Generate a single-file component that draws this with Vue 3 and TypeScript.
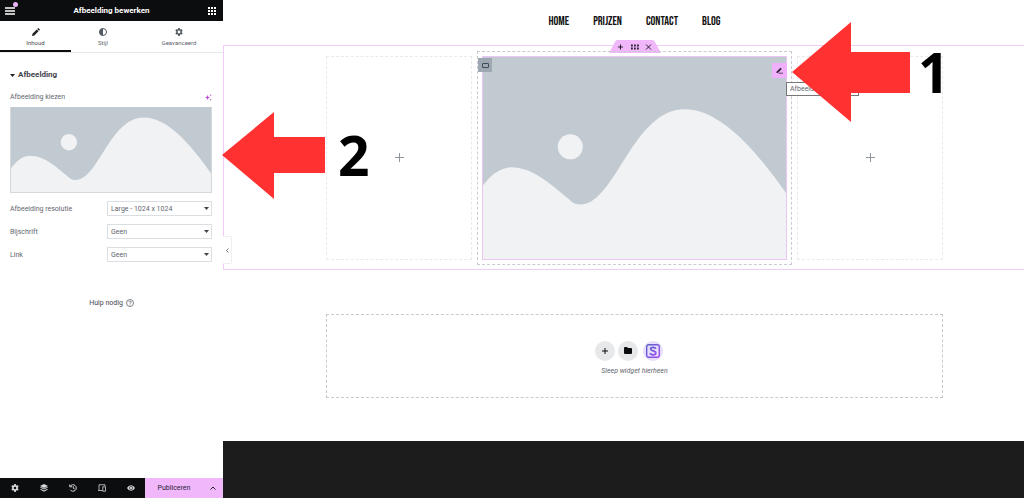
<script setup lang="ts">
import { ref } from 'vue'

interface Tab { id: string; label: string }
interface Field { id: string; label: string; options: string[] }

const tabs: Tab[] = [
  { id: 'content', label: 'Inhoud' },
  { id: 'style', label: 'Stijl' },
  { id: 'advanced', label: 'Geavanceerd' },
]
const activeTab = ref('content')

const fields: Field[] = [
  { id: 'resolution', label: 'Afbeelding resolutie', options: ['Large - 1024 x 1024', 'Medium - 300 x 300'] },
  { id: 'caption', label: 'Bijschrift', options: ['Geen', 'Aangepast bijschrift'] },
  { id: 'link', label: 'Link', options: ['Geen', 'Mediabestand'] },
]
const values = ref<Record<string, string>>({
  resolution: 'Large - 1024 x 1024',
  caption: 'Geen',
  link: 'Geen',
})

const navItems: string[] = ['HOME', 'PRIJZEN', 'CONTACT', 'BLOG']
const hills = 'M0 130C10 117 19 111 29 111C52 111 72 131 88 144C91 147 95 148 98 148C133 148 150 53 202 53C237 53 272 92 304 138V203H0Z'
</script>

<template>
  <div class="editor">
    <aside class="panel">
      <header class="panel-head">
        <button class="bare menu" aria-label="Menu">
          <svg width="10" height="8" viewBox="0 0 10 8"><path d="M0 1h10M0 4h10M0 7h10" stroke="#fff" stroke-width="1.4" /></svg>
          <span class="dot"></span>
        </button>
        <h1>Afbeelding bewerken</h1>
        <button class="bare" aria-label="Widgets">
          <svg width="8" height="8" viewBox="0 0 8 8" fill="#fff"><path d="M0 0h2v2H0zM3 0h2v2H3zM6 0h2v2H6zM0 3h2v2H0zM3 3h2v2H3zM6 3h2v2H6zM0 6h2v2H0zM3 6h2v2H3zM6 6h2v2H6z" /></svg>
        </button>
      </header>

      <nav class="tabs">
        <button
          v-for="tab in tabs"
          :key="tab.id"
          class="tab"
          :class="[tab.id, { active: tab.id === activeTab }]"
          @click="activeTab = tab.id"
        >
          <svg v-if="tab.id === 'content'" width="8" height="8" viewBox="0 0 8 8" fill="#1f2124"><path d="M0 8l.5-2.3L4.7 1.500 6.500 3.300 2.300 7.500zM5.200 1l.8-.8q.3-.3.6 0l1.200 1.200q.3.300 0 .6L7 2.800z" /></svg>
          <svg v-else-if="tab.id === 'style'" width="8" height="8" viewBox="0 0 8 8"><circle cx="4" cy="4" r="3.500" fill="#fff" stroke="#515962" /><path d="M4 .5a3.500 3.500 0 0 0 0 7z" fill="#515962" /></svg>
          <svg v-else width="8" height="8" viewBox="0 0 16 16"><path fill="#515962" fill-rule="evenodd" d="M6.500 0h3l.5 2.300 1.600.9 2.200-.8 1.500 2.700L13.600 7v2l1.700 1.500-1.500 2.700-2.200-.7-1.600.9-.5 2.600h-3L6 13.400l-1.600-.9-2.200.7-1.500-2.700L2.400 9V7L.7 5.100l1.500-2.700 2.200.8L6 2.300zM8 5.200a2.800 2.800 0 1 0 0 5.600 2.800 2.800 0 0 0 0-5.600z" /></svg>
          <span>{{ tab.label }}</span>
        </button>
      </nav>

      <section class="controls">
        <h2>
          <svg width="5" height="3" viewBox="0 0 5 3"><path d="M0 0h5L2.500 3z" fill="#1f2124" /></svg>
          Afbeelding
        </h2>
        <div class="choose">
          <span>Afbeelding kiezen</span>
          <button class="bare" aria-label="AI">
            <svg width="7" height="7" viewBox="0 0 14 14" fill="#c04fd8"><path d="M5 2l1.500 3.500L10 7 6.500 8.500 5 12 3.500 8.500 0 7l3.500-1.500zM11.500 0l.7 1.800 1.800.7-1.800.7-.7 1.800-.7-1.800L9 2.500l1.800-.7zM11.500 9l.7 1.800 1.800.7-1.800.7-.7 1.800-.7-1.800L9 11.500l1.800-.7z" /></svg>
          </button>
        </div>
        <button class="preview" aria-label="Afbeelding kiezen">
          <svg viewBox="0 0 304 203" preserveAspectRatio="xMidYMid slice">
            <rect width="304" height="203" fill="#c2cad1" />
            <circle cx="88" cy="90.500" r="12.500" fill="#f1f2f4" />
            <path :d="hills" fill="#f1f2f4" />
          </svg>
        </button>
        <div v-for="field in fields" :key="field.id" class="field">
          <label :for="field.id">{{ field.label }}</label>
          <div class="select">
            <select :id="field.id" v-model="values[field.id]">
              <option v-for="option in field.options" :key="option">{{ option }}</option>
            </select>
            <svg width="5" height="3" viewBox="0 0 5 3"><path d="M0 0h5L2.500 3z" fill="#3f444b" /></svg>
          </div>
        </div>
      </section>

      <a class="help" href="#">
        Hulp nodig
        <svg width="8" height="8" viewBox="0 0 16 16" fill="none" stroke="#515962" stroke-width="1.500"><circle cx="8" cy="8" r="7" /><path d="M5.800 6.200a2.200 2.200 0 1 1 3.200 2Q8 8.700 8 9.800M8 11.200v1.500" /></svg>
      </a>

      <footer class="panel-foot">
        <button class="bare" aria-label="Instellingen">
          <svg width="8" height="8" viewBox="0 0 16 16"><path fill="#d5d8dc" fill-rule="evenodd" d="M6.500 0h3l.5 2.300 1.600.9 2.200-.8 1.500 2.700L13.600 7v2l1.700 1.500-1.500 2.700-2.200-.7-1.600.9-.5 2.600h-3L6 13.400l-1.600-.9-2.200.7-1.500-2.700L2.400 9V7L.7 5.100l1.500-2.700 2.200.8L6 2.300zM8 5.600a2.400 2.400 0 1 0 0 4.800 2.400 2.400 0 0 0 0-4.800z" /></svg>
        </button>
        <button class="bare" aria-label="Structuur">
          <svg width="8" height="8" viewBox="0 0 16 16" fill="#d5d8dc"><path d="M8 0l8 4-8 4-8-4zM0 7l2-.8 6 3 6-3 2 .8-8 4.200zM0 11l2-.8 6 3 6-3 2 .8L8 15.500z" /></svg>
        </button>
        <button class="bare" aria-label="Geschiedenis">
          <svg width="8" height="8" viewBox="0 0 16 16" fill="none" stroke="#d5d8dc" stroke-width="2"><path d="M2.500 4.500a6.500 6.500 0 1 1 0 7M1.500 1v4.500H6M8.500 4.500v4l2.800 1.500" /></svg>
        </button>
        <button class="bare" aria-label="Responsief">
          <svg width="8" height="8" viewBox="0 0 16 16" fill="none" stroke="#d5d8dc" stroke-width="1.600"><path d="M14 4V1.500H2V12M0 13h9M9.500 5.500h5.500v9H9.500z" /></svg>
        </button>
        <button class="bare" aria-label="Voorbeeld">
          <svg width="8" height="6" viewBox="0 0 16 12"><path fill="#d5d8dc" d="M0 6Q3 .5 8 .5T16 6q-3 5.500-8 5.500T0 6z" /><circle cx="8" cy="6" r="3.200" fill="none" stroke="#0c0d0e" stroke-width="1.200" /></svg>
        </button>
        <button class="publish">Publiceren</button>
        <button class="more" aria-label="Opslagopties">
          <svg width="6" height="4" viewBox="0 0 6 4"><path d="M.5 3.500L3 1l2.500 2.500" fill="none" stroke="#1f2124" /></svg>
        </button>
      </footer>
    </aside>

    <main class="canvas">
      <nav class="site-nav">
        <a v-for="item in navItems" :key="item" href="#">{{ item }}</a>
      </nav>

      <section class="row">
        <div class="row-handle">
          <svg width="52" height="13" viewBox="0 0 52 13"><path d="M8 0h36q1 0 2 2l6 11H0L6 2q1-2 2-2z" fill="#f0b8fb" /><g stroke="#2b2032" fill="none"><path d="M9 7h5M11.500 4.500v5M37 4.500l5 5M42 4.500l-5 5" /><path d="M22 5.500h8M22 8.500h8" stroke-width="1.800" stroke-dasharray="1.800 1.200" /></g></svg>
        </div>
        <div class="column empty"><button class="bare" aria-label="Toevoegen"><svg width="9" height="9" viewBox="0 0 9 9"><path d="M0 4.500h9M4.500 0v9" stroke="#8f959b" /></svg></button></div>
        <div class="column filled">
          <div class="widget">
            <svg viewBox="0 0 304 203">
              <rect width="304" height="203" fill="#c2cad1" />
              <circle cx="88" cy="90.500" r="12.500" fill="#f1f2f4" />
              <path :d="hills" fill="#f1f2f4" />
            </svg>
          </div>
          <button class="column-handle" aria-label="Kolom bewerken">
            <svg width="7" height="5" viewBox="0 0 7 5"><rect x=".5" y=".5" width="6" height="4" rx=".5" fill="none" stroke="#3f4b55" /></svg>
          </button>
          <button class="edit" aria-label="Afbeelding bewerken">
            <svg width="7" height="7" viewBox="0 0 14 14" fill="#2b2032"><path d="M1 9.500L9 1.500l2.500 2.500-8 8H1zM6 11.500h8V13H4.500z" /></svg>
          </button>
          <span class="tooltip">Afbeelding bewerken</span>
        </div>
        <div class="column empty"><button class="bare" aria-label="Toevoegen"><svg width="9" height="9" viewBox="0 0 9 9"><path d="M0 4.500h9M4.500 0v9" stroke="#8f959b" /></svg></button></div>
      </section>

      <section class="dropzone">
        <div class="drop-actions">
          <button class="round" aria-label="Container toevoegen"><svg width="6" height="6" viewBox="0 0 6 6"><path d="M0 3h6M3 0v6" stroke="#0c0d0e" /></svg></button>
          <button class="round" aria-label="Sjabloon toevoegen"><svg width="8" height="7" viewBox="0 0 8 7"><path d="M1 0h2l1 1h3q1 0 1 1v4q0 1-1 1H1Q0 7 0 6V1q0-1 1-1z" fill="#0c0d0e" /></svg></button>
          <button class="round brand" aria-label="Bibliotheek">
            <svg width="14" height="14" viewBox="0 0 14 14" fill="none">
              <defs><linearGradient id="brand" x1="0" y1="0" x2="1" y2="1"><stop stop-color="#5a62c8" /><stop offset="1" stop-color="#a04cf5" /></linearGradient></defs>
              <rect x=".7" y=".7" width="12.600" height="12.600" rx="2" stroke="url(#brand)" stroke-width="1.400" />
              <path d="M9.600 5C9.300 2.700 4.600 2.700 4.600 5c0 2.400 5.200 1.400 5.200 4 0 2.500-5.300 2.500-5.500 0" stroke="url(#brand)" stroke-width="1.700" />
            </svg>
          </button>
        </div>
        <p>Sleep widget hierheen</p>
      </section>

      <footer class="site-foot"></footer>

      <button class="collapse" aria-label="Paneel verbergen"><svg width="3" height="5" viewBox="0 0 3 5"><path d="M2.500.5l-2 2 2 2" fill="none" stroke="#515962" stroke-width=".8" /></svg></button>

      <svg class="arrow arrow-one" width="118" height="100" viewBox="0 0 118 100"><path d="M0 50L59 0v30h59v41H59v29z" fill="#ff3131" /></svg>
      <strong class="step step-one">1</strong>
      <svg class="arrow arrow-two" width="103" height="87" viewBox="0 0 103 87"><path d="M0 43L52 0v25h51v36H52v26z" fill="#ff3131" /></svg>
      <strong class="step step-two">2</strong>
    </main>
  </div>
</template>

<style>
body { margin: 0; }
</style>

<style scoped>
* { box-sizing: border-box; }
.editor {
  display: flex;
  min-height: 100vh;
  background: #fff;
  color: #5f666e;
  font: 7px/10px Roboto, "Liberation Sans", sans-serif;
}
button { padding: 0; border: 0; font: inherit; color: inherit; background: none; cursor: pointer; }
svg { display: block; flex: none; }
a { color: inherit; text-decoration: none; }
.bare { display: flex; align-items: center; justify-content: center; }

.panel { display: flex; flex-direction: column; flex: 0 0 223px; }
.panel-head {
  display: flex; align-items: center; justify-content: space-between;
  height: 21px; padding: 0 7px 0 5px; background: #0c0d0e; color: #fff;
}
.panel-head h1 { margin: 0; font-size: 8px; line-height: 10px; font-weight: 700; }
.menu { position: relative; }
.dot { position: absolute; top: -5px; right: -3px; width: 5px; height: 5px; border-radius: 50%; background: #e9b4f8; }

.tabs { display: flex; height: 32px; border-bottom: 1px solid #e6e8ea; }
.tab {
  display: flex; flex-direction: column; align-items: center; gap: 3px;
  padding-top: 7px; font-size: 6px; line-height: 8px; border-bottom: 2px solid transparent;
}
.content { flex: 71; }
.style { flex: 64; }
.advanced { flex: 88; }
.active { border-color: #0c0d0e; color: #3f444b; }

.controls { display: flex; flex-direction: column; padding: 17px 11px 0 10px; }
.controls h2 { display: flex; align-items: center; gap: 3px; margin: 0 0 12px; font-size: 8px; line-height: 10px; font-weight: 700; color: #3f444b; }
.choose { display: flex; justify-content: space-between; margin-bottom: 5px; }
.preview { height: 86px; margin-bottom: 8px; border: 1px solid #d5d8dc; border-top: 0; }
.preview svg { width: 100%; height: 100%; }
.field { display: flex; align-items: center; justify-content: space-between; margin-bottom: 8px; }
.select { position: relative; width: 105px; }
.select select {
  display: block; width: 100%; height: 15px; padding: 0 10px 0 3px;
  border: 1px solid #dcdfe2; border-radius: 0; appearance: none; background: #fff; color: inherit;
  font: inherit;
}
.select svg { position: absolute; top: 6px; right: 3px; pointer-events: none; }
.help { display: flex; align-items: center; justify-content: center; gap: 3px; margin-top: 28px; color: #3f444b; }

.panel-foot { display: flex; height: 20px; margin-top: auto; background: #0c0d0e; }
.panel-foot .bare { flex: 29; }
.publish { flex: 58; background: #f0b8fb; color: #2b2032; }
.more { display: flex; align-items: center; justify-content: center; flex: 20; background: #f0b8fb; }

.canvas { position: relative; display: flex; flex-direction: column; flex: 1; min-width: 0; }
.site-nav {
  display: flex; justify-content: center; gap: 24px; padding: 15px 0 17px 22px;
  font: 400 12px/13px "Bebas Neue", "Liberation Sans Narrow", "Liberation Sans", sans-serif; color: #111;
}
.row {
  position: relative; display: grid; grid-template-columns: 146fr 315fr 146fr; gap: 5px;
  padding: 5px 81px 4px 102px; border: 1px solid #efcdf8; border-right: 0;
}
.row-handle { position: absolute; top: -6px; left: calc(50% + 11px); transform: translateX(-50%); }
.column { border: 1px dashed #e8eaec; }
.empty { display: flex; align-items: center; justify-content: center; margin: 5px 0; }
.filled { position: relative; padding: 4px; border-color: #c8cbcf; }
.widget { position: relative; }
.widget::after { content: ""; position: absolute; inset: 0; border: 1px solid #ecc5f5; }
.widget svg { width: 100%; height: auto; }
.column-handle {
  position: absolute; top: 6px; left: 0; display: flex; align-items: center; justify-content: center;
  width: 14px; height: 14px; background: #9da8b2;
}
.edit {
  position: absolute; top: 11px; right: 4px; display: flex; align-items: center; justify-content: center;
  width: 15px; height: 15px; background: #f0b0fb;
}
.tooltip {
  position: absolute; top: 30px; left: calc(100% - 5px); z-index: 1; padding: 1px 3px;
  border: 1px solid #777; background: #fff; white-space: nowrap;
}
.dropzone {
  display: flex; flex-direction: column; align-items: center; gap: 5px;
  margin: 44px 81px 43px 103px; padding: 26px 0 21px; border: 1px dashed #c8cbce;
}
.drop-actions { display: flex; gap: 3px; padding-right: 12px; }
.round { display: flex; align-items: center; justify-content: center; width: 20px; height: 20px; border-radius: 50%; background: #e6e8ea; }
.brand { margin-left: 2px; background: #e6defa; }
.dropzone p { margin: 0; font-style: italic; }
.site-foot { flex: 1; min-height: 57px; background: #1c1c1c; }

.collapse {
  position: absolute; top: 236px; left: 0; display: flex; align-items: center; justify-content: center;
  width: 9px; height: 28px; border: 1px solid #eceef0; border-left: 0; border-radius: 0 2px 2px 0; background: #fff;
}
.arrow, .step { position: absolute; z-index: 2; }
.step { font: 700 55px/56px "Open Sans", sans-serif; color: #000; }
.arrow-one { top: 22px; left: 569px; }
.step-one { top: 44px; left: 695px; }
.arrow-two { top: 112px; left: -1px; }
.step-two { top: 127px; left: 115px; }
</style>
